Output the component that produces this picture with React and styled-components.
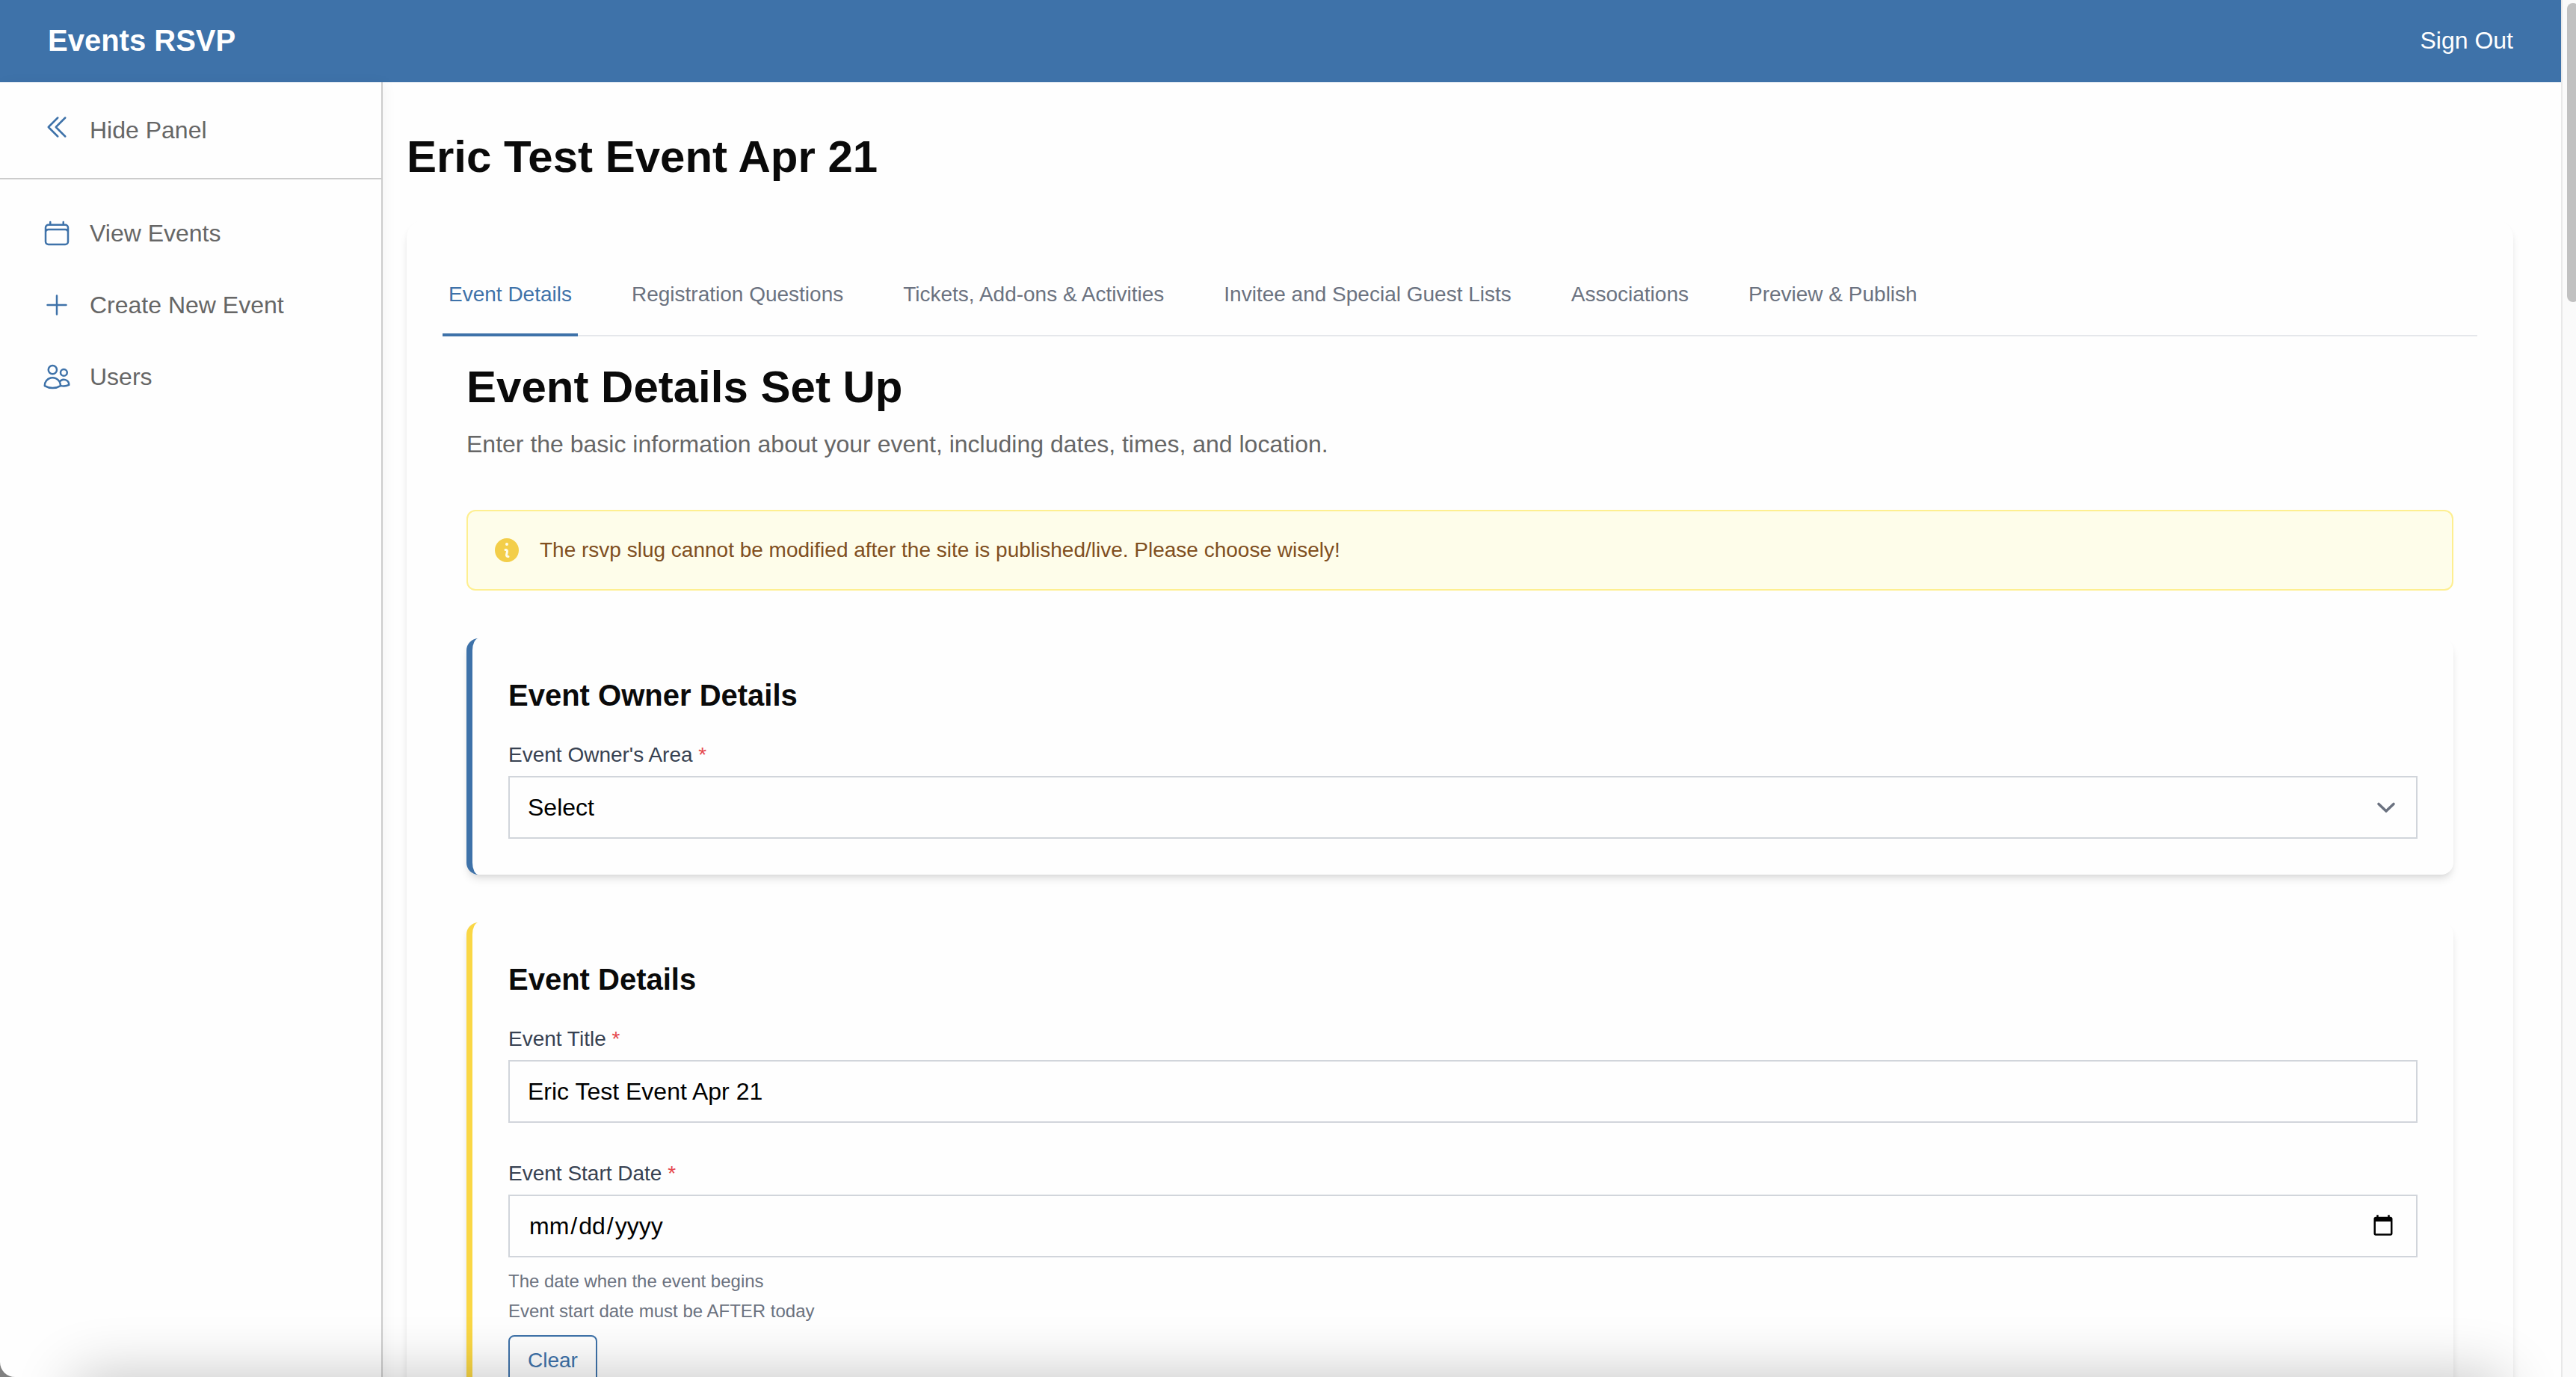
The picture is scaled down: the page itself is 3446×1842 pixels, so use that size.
import { useState } from "react";
import styled, { createGlobalStyle } from "styled-components";
import {
  HiMiniInformationCircle,
  HiOutlineCalendar,
  HiOutlineChevronDoubleLeft,
  HiOutlinePlus,
  HiOutlineUsers,
} from "react-icons/hi2";

const GlobalStyle = createGlobalStyle`
  :root {
    --color-primary: #3e72a9;
    --color-accent: #fad745;
    --color-surface: #fefefe;
    --color-text: #0a0a0a;
    --color-muted: #666666;
    --color-gray: #6b7280;
    --color-label: #374151;
    --color-border: #d1d5db;
    --color-required: #e5484d;
    --shadow-card: 0 8px 12px -2px rgba(0, 0, 0, 0.1),
      0 4px 8px -4px rgba(0, 0, 0, 0.1);
  }

  *,
  *::before,
  *::after {
    box-sizing: border-box;
  }

  body {
    margin: 0;
    background: #808080;
    color: var(--color-text);
    font-family: "Liberation Sans", Arial, sans-serif;
    font-size: 32px;
    line-height: 48px;
  }

  h1, h2, h3, p {
    margin: 0;
  }

  button, input, select {
    font: inherit;
  }
`;

const Window = styled.div`
  display: flex;
  height: 100vh;
  overflow: hidden;
  background: var(--color-surface);
  border-bottom-left-radius: 20px;
`;

const Page = styled.div`
  flex: 1;
  min-width: 0;
  display: flex;
  flex-direction: column;
  overflow-y: auto;
  scrollbar-width: none;
`;

const ScrollTrack = styled.div`
  width: 20px;
  padding: 4px 0 0 6px;
  overflow: hidden;
  border-left: 2px solid #e8e8e8;
  background: #fafafa;
`;

const ScrollThumb = styled.div`
  width: 16px;
  height: 400px;
  border-radius: 8px;
  background: #c1c1c1;
`;

const Header = styled.header`
  display: flex;
  flex-shrink: 0;
  justify-content: space-between;
  align-items: center;
  height: 110px;
  padding: 0 64px 2px;
  color: #ffffff;
  background: var(--color-primary);
`;

const Brand = styled.a`
  font-size: 40px;
  font-weight: 700;
  color: inherit;
  text-decoration: none;
`;

const SignOut = styled.button`
  padding: 0;
  border: none;
  color: inherit;
  background: none;
  cursor: pointer;
`;

const Body = styled.div`
  display: flex;
  flex: 1 0 auto;
`;

const Sidebar = styled.aside`
  width: 512px;
  flex-shrink: 0;
  border-right: 2px solid #cccccc;
  box-shadow: 4px 0 16px rgba(0, 0, 0, 0.04);
`;

const HidePanel = styled.button`
  display: flex;
  align-items: center;
  gap: 24px;
  width: 100%;
  height: 130px;
  padding: 0 56px;
  border: none;
  border-bottom: 2px solid #cccccc;
  color: var(--color-muted);
  background: none;
  cursor: pointer;

  svg {
    width: 40px;
    height: 40px;
    margin-bottom: 8px;
    color: var(--color-primary);
  }
`;

const Nav = styled.nav`
  padding: 24px 0;
`;

const NavLink = styled.a`
  display: flex;
  align-items: center;
  gap: 24px;
  padding: 24px 56px;
  color: var(--color-muted);
  text-decoration: none;

  svg {
    width: 40px;
    height: 40px;
    color: var(--color-primary);
  }
`;

const Main = styled.main`
  flex: 1;
  min-width: 0;
  padding: 64px 64px 64px 32px;
`;

const PageTitle = styled.h1`
  font-size: 60px;
  line-height: 72px;
`;

const Panel = styled.div`
  margin-top: 48px;
  padding: 48px;
  border-radius: 24px;
  background: var(--color-surface);
  box-shadow: var(--shadow-card);
`;

const Tabs = styled.div`
  display: flex;
  gap: 64px;
  box-shadow: inset 0 -2px 0 #e5e7eb;
`;

const Tab = styled.button`
  padding: 32px 8px;
  border: none;
  border-bottom: 4px solid
    ${(props) => (props.$active ? "var(--color-primary)" : "transparent")};
  font-size: 28px;
  line-height: 40px;
  color: ${(props) =>
    props.$active ? "var(--color-primary)" : "var(--color-gray)"};
  background: none;
  white-space: nowrap;
  cursor: pointer;
`;

const TabPanel = styled.div`
  padding: 32px;
`;

const SectionTitle = styled.h2`
  font-size: 60px;
  line-height: 72px;
`;

const Intro = styled.p`
  margin-top: 16px;
  color: var(--color-muted);
`;

const Notice = styled.div`
  display: flex;
  align-items: center;
  gap: 24px;
  margin-top: 64px;
  padding: 32px;
  border: 2px solid #feef90;
  border-radius: 12px;
  font-size: 28px;
  line-height: 40px;
  color: #804f1f;
  background: #fefdea;

  svg {
    flex-shrink: 0;
    width: 40px;
    height: 40px;
    color: #f3ce49;
  }
`;

const Card = styled.section`
  margin-top: 64px;
  padding: 48px;
  border-left: 8px solid
    ${(props) =>
      props.$accent ? "var(--color-accent)" : "var(--color-primary)"};
  border-radius: 16px;
  background: var(--color-surface);
  box-shadow: var(--shadow-card);
`;

const CardTitle = styled.h3`
  margin-bottom: 32px;
  font-size: 40px;
  line-height: 56px;
`;

const Field = styled.div`
  & + & {
    margin-top: 48px;
  }
`;

const Label = styled.label`
  display: block;
  margin-bottom: 8px;
  font-size: 28px;
  line-height: 40px;
  color: var(--color-label);

  span {
    color: var(--color-required);
  }
`;

const Input = styled.input`
  display: block;
  width: 100%;
  height: 84px;
  padding: 16px 24px;
  border: 2px solid var(--color-border);
  border-radius: 0;
  color: #000000;
  background: var(--color-surface);

  &::-webkit-datetime-edit-month-field,
  &::-webkit-datetime-edit-day-field,
  &::-webkit-datetime-edit-year-field {
    padding: 0 2px;
  }

  &::-webkit-calendar-picker-indicator {
    margin-right: 2px;
  }
`;

const SelectWrap = styled.div`
  position: relative;

  svg {
    position: absolute;
    top: 22px;
    right: 22px;
    width: 40px;
    height: 40px;
    color: var(--color-gray);
    pointer-events: none;
  }
`;

const Select = styled(Input)`
  appearance: none;
`;

const Hint = styled.p`
  margin-top: ${(props) => (props.$first ? "16px" : "8px")};
  font-size: 24px;
  line-height: 32px;
  color: var(--color-gray);
`;

const BtnOutlined = styled.button`
  margin-top: 16px;
  padding: 12px 24px;
  border: 2px solid var(--color-primary);
  border-radius: 8px;
  font-size: 28px;
  line-height: 40px;
  color: var(--color-primary);
  background: var(--color-surface);
  cursor: pointer;
`;

// soft shade that rises from the bottom edge of the window
const BottomShade = styled.div`
  position: fixed;
  top: 100%;
  left: 100px;
  right: 100px;
  height: 100px;
  box-shadow: 0 0 80px rgba(0, 0, 0, 0.24);
  pointer-events: none;
`;

const navItems = [
  { label: "View Events", icon: HiOutlineCalendar },
  { label: "Create New Event", icon: HiOutlinePlus },
  { label: "Users", icon: HiOutlineUsers },
];

const tabs = [
  "Event Details",
  "Registration Questions",
  "Tickets, Add-ons & Activities",
  "Invitee and Special Guest Lists",
  "Associations",
  "Preview & Publish",
];

const ChevronDown = () => (
  <svg viewBox="0 0 40 40" fill="none" aria-hidden="true">
    <path
      d="M10 15.5l10 9.5 10-9.5"
      stroke="currentColor"
      strokeWidth="3.6"
      strokeLinecap="round"
      strokeLinejoin="round"
    />
  </svg>
);

const App = () => {
  const [activeTab, setActiveTab] = useState(tabs[0]);
  const [title, setTitle] = useState("Eric Test Event Apr 21");
  const [startDate, setStartDate] = useState("");

  return (
    <>
      <GlobalStyle />
      <Window>
        <Page>
          <Header>
            <Brand href="#">Events RSVP</Brand>
            <SignOut type="button">Sign Out</SignOut>
          </Header>
          <Body>
            <Sidebar>
              <HidePanel type="button">
                <HiOutlineChevronDoubleLeft />
                Hide Panel
              </HidePanel>
              <Nav>
                {navItems.map(({ label, icon: Icon }) => (
                  <NavLink href="#" key={label}>
                    <Icon />
                    {label}
                  </NavLink>
                ))}
              </Nav>
            </Sidebar>
            <Main>
              <PageTitle>Eric Test Event Apr 21</PageTitle>
              <Panel>
                <Tabs role="tablist">
                  {tabs.map((tab) => (
                    <Tab
                      key={tab}
                      type="button"
                      role="tab"
                      aria-selected={tab === activeTab}
                      $active={tab === activeTab}
                      onClick={() => setActiveTab(tab)}
                    >
                      {tab}
                    </Tab>
                  ))}
                </Tabs>
                <TabPanel role="tabpanel">
                  <SectionTitle>Event Details Set Up</SectionTitle>
                  <Intro>
                    Enter the basic information about your event, including
                    dates, times, and location.
                  </Intro>
                  <Notice>
                    <HiMiniInformationCircle />
                    The rsvp slug cannot be modified after the site is
                    published/live. Please choose wisely!
                  </Notice>
                  <Card>
                    <CardTitle>Event Owner Details</CardTitle>
                    <Field>
                      <Label htmlFor="ownerArea">
                        Event Owner's Area <span>*</span>
                      </Label>
                      <SelectWrap>
                        <Select as="select" id="ownerArea" name="ownerArea">
                          <option>Select</option>
                        </Select>
                        <ChevronDown />
                      </SelectWrap>
                    </Field>
                  </Card>
                  <Card $accent>
                    <CardTitle>Event Details</CardTitle>
                    <Field>
                      <Label htmlFor="eventTitle">
                        Event Title <span>*</span>
                      </Label>
                      <Input
                        id="eventTitle"
                        name="eventTitle"
                        value={title}
                        onChange={(e) => setTitle(e.target.value)}
                      />
                    </Field>
                    <Field>
                      <Label htmlFor="startDate">
                        Event Start Date <span>*</span>
                      </Label>
                      <Input
                        type="date"
                        id="startDate"
                        name="startDate"
                        value={startDate}
                        onChange={(e) => setStartDate(e.target.value)}
                      />
                      <Hint $first>The date when the event begins</Hint>
                      <Hint>Event start date must be AFTER today</Hint>
                      <BtnOutlined
                        type="button"
                        onClick={() => setStartDate("")}
                      >
                        Clear
                      </BtnOutlined>
                    </Field>
                  </Card>
                </TabPanel>
              </Panel>
            </Main>
          </Body>
        </Page>
        <ScrollTrack>
          <ScrollThumb />
        </ScrollTrack>
      </Window>
      <BottomShade />
    </>
  );
};

export default App;
